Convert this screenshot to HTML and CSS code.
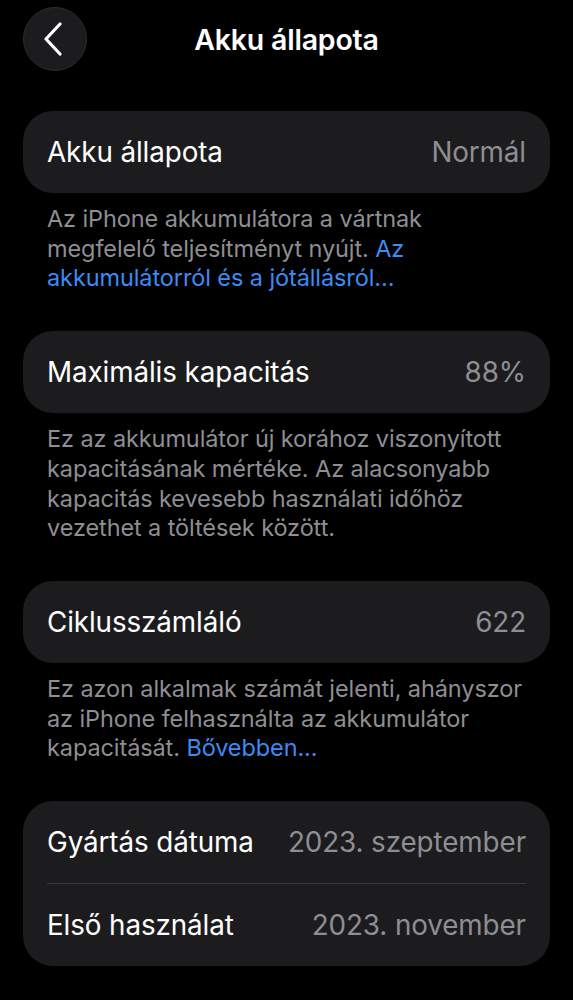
FILE: index.html
```html
<!DOCTYPE html>
<html lang="hu">

<head>
    <meta charset="UTF-8">
    <meta name="viewport" content="width=device-width, initial-scale=1.0">
    <title>Akku állapota</title>
    <link rel="stylesheet" href="styles.css">
</head>

<body>

    <header class="nav-bar">
        <button class="back-button" aria-label="Vissza">
            <svg width="20" height="34" viewBox="0 0 20 34">
                <path d="M17 2 L3 17 L17 32" fill="none" stroke="#ffffff" stroke-width="3.2" stroke-linecap="round" stroke-linejoin="round" />
            </svg>
        </button>
        <h1>Akku állapota</h1>
        <span></span>
    </header>

    <main class="content">
        <section class="group">
            <div class="cell">
                <span class="label">Akku állapota</span>
                <span class="value">Normál</span>
            </div>
        </section>
        <p class="footer-text">Az iPhone akkumulátora a vártnak<br>megfelelő teljesítményt nyújt. <a href="#">Az akkumulátorról és a jótállásról...</a></p>

        <section class="group">
            <div class="cell">
                <span class="label">Maximális kapacitás</span>
                <span class="value">88%</span>
            </div>
        </section>
        <p class="footer-text">Ez az akkumulátor új korához viszonyított kapacitásának mértéke. Az alacsonyabb kapacitás kevesebb használati időhöz vezethet a töltések között.</p>

        <section class="group">
            <div class="cell">
                <span class="label">Ciklusszámláló</span>
                <span class="value">622</span>
            </div>
        </section>
        <p class="footer-text">Ez azon alkalmak számát jelenti, ahányszor az iPhone felhasználta az akkumulátor kapacitását. <a href="#">Bővebben...</a></p>

        <section class="group">
            <div class="cell">
                <span class="label">Gyártás dátuma</span>
                <span class="value">2023. szeptember</span>
            </div>
            <div class="cell">
                <span class="label">Első használat</span>
                <span class="value">2023. november</span>
            </div>
        </section>
    </main>

</body>

</html>
```

FILE: styles.css
```css
body {
    font-family: Inter, "Noto Sans", sans-serif;
    background-color: #000000;
    color: #ffffff;
    margin: 0;
}

.nav-bar {
    display: grid;
    grid-template-columns: 64px 1fr 64px;
    align-items: center;
    padding: 7px 23px 0;
}

.back-button {
    width: 64px;
    height: 64px;
    border-radius: 50%;
    background-color: #1c1c1e;
    border: 1px solid #2c2c2e;
    display: flex;
    justify-content: center;
    align-items: center;
    padding: 0 4px 0 0;
    cursor: pointer;
}

.nav-bar h1 {
    margin: 0;
    text-align: center;
    font-size: 28.5px;
    font-weight: 600;
    letter-spacing: -0.2px;
}

.content {
    padding: 40px 23px 0;
}

.group {
    background-color: #1c1c1e;
    border-radius: 30px;
}

.cell {
    display: flex;
    justify-content: space-between;
    align-items: center;
    height: 82px;
    margin: 0 24px;
    font-size: 27.8px;
    letter-spacing: -0.1px;
}

.cell + .cell {
    border-top: 1px solid #38383a;
}

.value {
    color: #8e8e93;
}

.footer-text {
    margin: 11px 12px 38px 24px;
    font-size: 23.5px;
    line-height: 29.7px;
    color: #8e8e93;
    letter-spacing: -0.1px;
}

.footer-text a {
    color: #3b8cf5;
    text-decoration: none;
}
```
